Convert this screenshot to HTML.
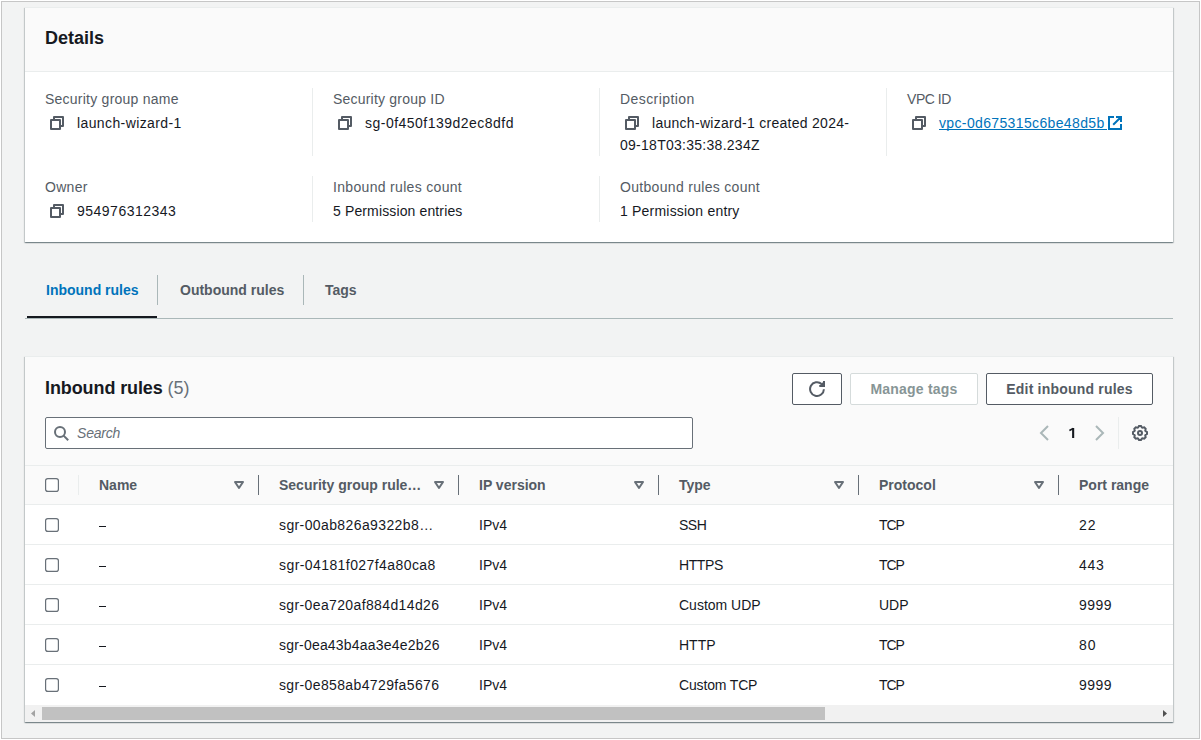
<!DOCTYPE html>
<html><head><meta charset="utf-8">
<style>
*{box-sizing:border-box;margin:0;padding:0}
html,body{width:1201px;height:740px;overflow:hidden;background:#fff}
body{font-family:"Liberation Sans",sans-serif;font-size:14px;color:#16191f;position:relative}
.frame{position:absolute;left:1px;top:1px;width:1199px;height:738px;border:1px solid #c6c6c6;background:#f2f3f3}
.abs{position:absolute;white-space:nowrap;line-height:22px}
.card{position:absolute;background:#fff;border-top:1px solid #eaeded;box-shadow:0 1px 1px 0 rgba(0,28,36,.3),1px 1px 1px 0 rgba(0,28,36,.15),-1px 1px 1px 0 rgba(0,28,36,.15)}
.lbl{color:#545b64}
.sep{position:absolute;width:1px;background:#eaeded}
.copy{position:absolute;width:14px;height:14px}
.b{font-weight:700}
.hdr{position:absolute;left:0;top:0;width:100%;background:#fafafa;border-bottom:1px solid #eaeded}
.cb{position:absolute;left:45px;width:14px;height:14px}
.tri{position:absolute;width:12px;height:10px}
.th{color:#545b64}
.btn{position:absolute;top:373px;height:32px;border:1px solid #545b64;border-radius:2px;background:#fff;color:#545b64;text-align:center;line-height:30px;white-space:nowrap}
</style></head>
<body>
<div class="frame"></div>

<!-- Details card -->
<div class="card" style="left:25px;top:7px;width:1148px;height:235px">
  <div class="hdr" style="height:64px"></div>
</div>
<div class="abs b" style="left:45px;top:27px;font-size:18px;line-height:22px">Details</div>

<div class="abs lbl" style="left:45px;top:88px;letter-spacing:0.24px">Security group name</div>
<div class="abs lbl" style="left:333px;top:88px;letter-spacing:0.21px">Security group ID</div>
<div class="abs lbl" style="left:620px;top:88px;letter-spacing:0.42px">Description</div>
<div class="abs lbl" style="left:907px;top:88px;letter-spacing:-0.46px">VPC ID</div>

<div class="abs" style="left:77px;top:112px;letter-spacing:0.39px">launch-wizard-1</div>
<div class="abs" style="left:365px;top:112px;letter-spacing:0.48px">sg-0f450f139d2ec8dfd</div>
<div class="abs" style="left:652px;top:112px;letter-spacing:0.28px">launch-wizard-1 created 2024-</div>
<div class="abs" style="left:620px;top:134px;letter-spacing:0.27px">09-18T03:35:38.234Z</div>
<div class="abs" style="left:939px;top:112px;color:#0073bb;letter-spacing:0.36px">vpc-0d675315c6be48d5b</div>
<div style="position:absolute;left:939px;top:129px;width:168px;height:1px;background:#0073bb"></div>

<div class="abs lbl" style="left:45px;top:176px;letter-spacing:0.3px">Owner</div>
<div class="abs lbl" style="left:333px;top:176px;letter-spacing:0.32px">Inbound rules count</div>
<div class="abs lbl" style="left:620px;top:176px;letter-spacing:0.31px">Outbound rules count</div>
<div class="abs" style="left:77px;top:200px;letter-spacing:0.49px">954976312343</div>
<div class="abs" style="left:333px;top:200px;letter-spacing:0.13px">5 Permission entries</div>
<div class="abs" style="left:620px;top:200px;letter-spacing:0.2px">1 Permission entry</div>

<div class="sep" style="left:312px;top:88px;height:68px"></div>
<div class="sep" style="left:599px;top:88px;height:68px"></div>
<div class="sep" style="left:886px;top:88px;height:68px"></div>
<div class="sep" style="left:312px;top:176px;height:46px"></div>
<div class="sep" style="left:599px;top:176px;height:46px"></div>

<!-- copy icons -->
<svg class="copy" style="left:50px;top:116px" viewBox="0 0 14 14"><path d="M4 4V1h9v9h-3M1 4h9v9H1z" fill="none" stroke="#545b64" stroke-width="2" stroke-linejoin="round"/></svg>
<svg class="copy" style="left:338px;top:116px" viewBox="0 0 14 14"><path d="M4 4V1h9v9h-3M1 4h9v9H1z" fill="none" stroke="#545b64" stroke-width="2" stroke-linejoin="round"/></svg>
<svg class="copy" style="left:625px;top:116px" viewBox="0 0 14 14"><path d="M4 4V1h9v9h-3M1 4h9v9H1z" fill="none" stroke="#545b64" stroke-width="2" stroke-linejoin="round"/></svg>
<svg class="copy" style="left:912px;top:116px" viewBox="0 0 14 14"><path d="M4 4V1h9v9h-3M1 4h9v9H1z" fill="none" stroke="#545b64" stroke-width="2" stroke-linejoin="round"/></svg>
<svg class="copy" style="left:50px;top:204px" viewBox="0 0 14 14"><path d="M4 4V1h9v9h-3M1 4h9v9H1z" fill="none" stroke="#545b64" stroke-width="2" stroke-linejoin="round"/></svg>
<!-- external link -->
<svg class="copy" style="left:1108px;top:116px" viewBox="0 0 14 14"><path d="M6 1H1v12h12V8M8 1h5v5M13 1L5.2 8.8" fill="none" stroke="#0073bb" stroke-width="2"/></svg>

<!-- Tabs -->
<div class="abs b" style="left:46px;top:279px;color:#0073bb">Inbound rules</div>
<div class="abs b" style="left:180px;top:279px;color:#545b64">Outbound rules</div>
<div class="abs b" style="left:325px;top:279px;color:#545b64">Tags</div>
<div style="position:absolute;left:157px;top:275px;width:1px;height:30px;background:#aab7b8"></div>
<div style="position:absolute;left:303px;top:275px;width:1px;height:30px;background:#aab7b8"></div>
<div style="position:absolute;left:25px;top:318px;width:1148px;height:1px;background:#aab7b8"></div>
<div style="position:absolute;left:27px;top:316px;width:130px;height:2px;background:#16191f"></div>

<!-- Inbound rules card -->
<div class="card" style="left:25px;top:356px;width:1148px;height:366px;background:#fafafa">
</div>
<div class="abs b" style="left:45px;top:377px;font-size:18px;letter-spacing:-0.1px">Inbound rules <span style="font-weight:400;color:#687078">(5)</span></div>

<!-- Buttons -->
<div class="btn" style="left:792px;width:50px"></div>
<svg style="position:absolute;left:809px;top:381px;width:16px;height:16px" viewBox="0 0 16 16"><path d="M14.9 8.2A6.9 6.9 0 1 1 12.6 2.9" fill="none" stroke="#545b64" stroke-width="2"/><path d="M10.3 5H15V0z" fill="#545b64"/><path d="M10.3 5H15V0" fill="none" stroke="#545b64" stroke-width="2"/></svg>
<div class="btn b" style="left:850px;width:128px;border-color:#d5dbdb;color:#879596;letter-spacing:0.2px">Manage tags</div>
<div class="btn b" style="left:986px;width:167px;letter-spacing:0.2px">Edit inbound rules</div>
<!-- Search -->
<div style="position:absolute;left:45px;top:417px;width:648px;height:32px;border:1px solid #687078;border-radius:2px;background:#fff"></div>
<svg style="position:absolute;left:52px;top:424px;width:18px;height:18px" viewBox="0 0 18 18"><circle cx="8" cy="8" r="5" fill="none" stroke="#687078" stroke-width="2"/><path d="M11.6 11.6l4.6 4.6" stroke="#687078" stroke-width="2"/></svg>
<div class="abs" style="left:77px;top:422px;font-style:italic;color:#687078;letter-spacing:-0.2px">Search</div>
<!-- Pagination -->
<svg style="position:absolute;left:1039px;top:425px;width:10px;height:16px" viewBox="0 0 10 16"><path d="M9 1L2 8l7 7" fill="none" stroke="#aab7b8" stroke-width="2"/></svg>
<svg style="position:absolute;left:1066px;top:426px;width:12px;height:14px" viewBox="0 0 12 14"><path d="M6.1 2h2.1v10H6.1z" fill="#16191f"/><path d="M3.4 4.4L7.2 2.5" stroke="#16191f" stroke-width="1.7"/></svg>
<svg style="position:absolute;left:1095px;top:425px;width:10px;height:16px" viewBox="0 0 10 16"><path d="M1 1l7 7-7 7" fill="none" stroke="#aab7b8" stroke-width="2"/></svg>
<div style="position:absolute;left:1118px;top:417px;width:1px;height:32px;background:#eaeded"></div>
<svg style="position:absolute;left:1131px;top:424px;width:18px;height:18px" viewBox="0 0 18 18"><circle cx="9" cy="9" r="2" fill="none" stroke="#545b64" stroke-width="2"/><path d="M7.10 3.50 8.00 2.00 10.00 2.00 10.90 3.50 11.55 3.77 13.24 3.34 14.66 4.76 14.23 6.45 14.50 7.10 16.00 8.00 16.00 10.00 14.50 10.90 14.23 11.55 14.66 13.24 13.24 14.66 11.55 14.23 10.90 14.50 10.00 16.00 8.00 16.00 7.10 14.50 6.45 14.23 4.76 14.66 3.34 13.24 3.77 11.55 3.50 10.90 2.00 10.00 2.00 8.00 3.50 7.10 3.77 6.45 3.34 4.76 4.76 3.34 6.45 3.77z" fill="none" stroke="#545b64" stroke-width="2" stroke-linejoin="miter"/></svg>
<!-- Table -->
<div style="position:absolute;left:25px;top:465px;width:1148px;height:1px;background:#eaeded"></div>
<div style="position:absolute;left:25px;top:505px;width:1148px;height:200px;background:#fff"></div>
<div style="position:absolute;left:25px;top:504px;width:1148px;height:1px;background:#eaeded"></div>
<div style="position:absolute;left:25px;top:544px;width:1148px;height:1px;background:#eaeded"></div>
<div style="position:absolute;left:25px;top:584px;width:1148px;height:1px;background:#eaeded"></div>
<div style="position:absolute;left:25px;top:624px;width:1148px;height:1px;background:#eaeded"></div>
<div style="position:absolute;left:25px;top:664px;width:1148px;height:1px;background:#eaeded"></div>
<svg class="cb" style="top:478px" viewBox="0 0 14 14"><rect x="0.6" y="0.6" width="12.8" height="12.8" rx="2.2" fill="#fff" stroke="#687078" stroke-width="1.2"/></svg>
<div style="position:absolute;left:78px;top:475px;width:1px;height:20px;background:#eaeded"></div>
<div class="abs b th" style="left:99px;top:474px">Name</div>
<svg class="tri" style="left:233px;top:480px" viewBox="0 0 12 10"><path d="M2 2h8L6 8z" fill="none" stroke="#687078" stroke-width="2" stroke-linejoin="round"/></svg>
<div style="position:absolute;left:258px;top:475px;width:1px;height:20px;background:#687078"></div>
<div class="abs b th" style="left:279px;top:474px">Security group rule…</div>
<svg class="tri" style="left:433px;top:480px" viewBox="0 0 12 10"><path d="M2 2h8L6 8z" fill="none" stroke="#687078" stroke-width="2" stroke-linejoin="round"/></svg>
<div style="position:absolute;left:458px;top:475px;width:1px;height:20px;background:#687078"></div>
<div class="abs b th" style="left:479px;top:474px">IP version</div>
<svg class="tri" style="left:633px;top:480px" viewBox="0 0 12 10"><path d="M2 2h8L6 8z" fill="none" stroke="#687078" stroke-width="2" stroke-linejoin="round"/></svg>
<div style="position:absolute;left:658px;top:475px;width:1px;height:20px;background:#687078"></div>
<div class="abs b th" style="left:679px;top:474px">Type</div>
<svg class="tri" style="left:833px;top:480px" viewBox="0 0 12 10"><path d="M2 2h8L6 8z" fill="none" stroke="#687078" stroke-width="2" stroke-linejoin="round"/></svg>
<div style="position:absolute;left:858px;top:475px;width:1px;height:20px;background:#687078"></div>
<div class="abs b th" style="left:879px;top:474px">Protocol</div>
<svg class="tri" style="left:1033px;top:480px" viewBox="0 0 12 10"><path d="M2 2h8L6 8z" fill="none" stroke="#687078" stroke-width="2" stroke-linejoin="round"/></svg>
<div style="position:absolute;left:1058px;top:475px;width:1px;height:20px;background:#687078"></div>
<div class="abs b th" style="left:1079px;top:474px">Port range</div>
<svg class="cb" style="top:518px" viewBox="0 0 14 14"><rect x="0.6" y="0.6" width="12.8" height="12.8" rx="2.2" fill="#fff" stroke="#687078" stroke-width="1.2"/></svg>
<div style="position:absolute;left:99px;top:526px;width:7px;height:1px;background:#16191f"></div>
<div class="abs" style="left:279px;top:514px;letter-spacing:0.39px">sgr-00ab826a9322b8…</div>
<div class="abs" style="left:479px;top:514px">IPv4</div>
<div class="abs" style="left:679px;top:514px;letter-spacing:-0.5px">SSH</div>
<div class="abs" style="left:879px;top:514px;letter-spacing:-1.1px">TCP</div>
<div class="abs" style="left:1079px;top:514px;letter-spacing:1px">22</div>
<svg class="cb" style="top:558px" viewBox="0 0 14 14"><rect x="0.6" y="0.6" width="12.8" height="12.8" rx="2.2" fill="#fff" stroke="#687078" stroke-width="1.2"/></svg>
<div style="position:absolute;left:99px;top:566px;width:7px;height:1px;background:#16191f"></div>
<div class="abs" style="left:279px;top:554px;letter-spacing:0.42px">sgr-04181f027f4a80ca8</div>
<div class="abs" style="left:479px;top:554px">IPv4</div>
<div class="abs" style="left:679px;top:554px;letter-spacing:-0.4px">HTTPS</div>
<div class="abs" style="left:879px;top:554px;letter-spacing:-1.1px">TCP</div>
<div class="abs" style="left:1079px;top:554px;letter-spacing:0.75px">443</div>
<svg class="cb" style="top:598px" viewBox="0 0 14 14"><rect x="0.6" y="0.6" width="12.8" height="12.8" rx="2.2" fill="#fff" stroke="#687078" stroke-width="1.2"/></svg>
<div style="position:absolute;left:99px;top:606px;width:7px;height:1px;background:#16191f"></div>
<div class="abs" style="left:279px;top:594px;letter-spacing:0.37px">sgr-0ea720af884d14d26</div>
<div class="abs" style="left:479px;top:594px">IPv4</div>
<div class="abs" style="left:679px;top:594px">Custom UDP</div>
<div class="abs" style="left:879px;top:594px">UDP</div>
<div class="abs" style="left:1079px;top:594px;letter-spacing:0.5px">9999</div>
<svg class="cb" style="top:638px" viewBox="0 0 14 14"><rect x="0.6" y="0.6" width="12.8" height="12.8" rx="2.2" fill="#fff" stroke="#687078" stroke-width="1.2"/></svg>
<div style="position:absolute;left:99px;top:646px;width:7px;height:1px;background:#16191f"></div>
<div class="abs" style="left:279px;top:634px;letter-spacing:0.2px">sgr-0ea43b4aa3e4e2b26</div>
<div class="abs" style="left:479px;top:634px">IPv4</div>
<div class="abs" style="left:679px;top:634px">HTTP</div>
<div class="abs" style="left:879px;top:634px;letter-spacing:-1.1px">TCP</div>
<div class="abs" style="left:1079px;top:634px;letter-spacing:1px">80</div>
<svg class="cb" style="top:678px" viewBox="0 0 14 14"><rect x="0.6" y="0.6" width="12.8" height="12.8" rx="2.2" fill="#fff" stroke="#687078" stroke-width="1.2"/></svg>
<div style="position:absolute;left:99px;top:686px;width:7px;height:1px;background:#16191f"></div>
<div class="abs" style="left:279px;top:674px;letter-spacing:0.37px">sgr-0e858ab4729fa5676</div>
<div class="abs" style="left:479px;top:674px">IPv4</div>
<div class="abs" style="left:679px;top:674px;letter-spacing:-0.16px">Custom TCP</div>
<div class="abs" style="left:879px;top:674px;letter-spacing:-1.1px">TCP</div>
<div class="abs" style="left:1079px;top:674px;letter-spacing:0.5px">9999</div>
<div style="position:absolute;left:25px;top:705px;width:1148px;height:17px;background:#f1f1f1"></div>
<div style="position:absolute;left:42px;top:707px;width:783px;height:13px;background:#c1c1c1"></div>
<svg style="position:absolute;left:31px;top:710px;width:4px;height:7px" viewBox="0 0 4 7"><path d="M4 0v7L0 3.5z" fill="#a3a3a3"/></svg>
<svg style="position:absolute;left:1163px;top:710px;width:4px;height:7px" viewBox="0 0 4 7"><path d="M0 0v7l4-3.5z" fill="#505050"/></svg>
</body></html>
